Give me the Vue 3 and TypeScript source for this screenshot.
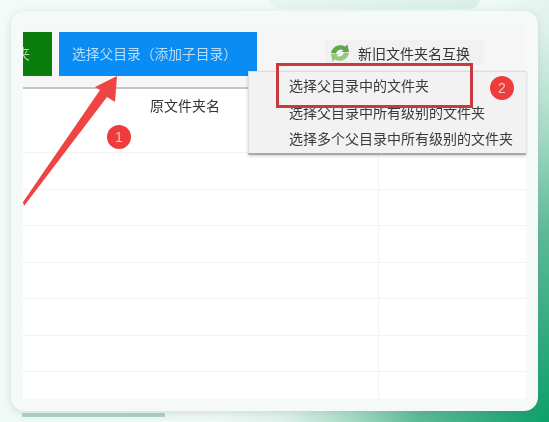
<script setup lang="ts">
const rows: number[] = [1, 2, 3, 4, 5, 6]
const menuItems: string[] = ['选择父目录中所有级别的文件夹', '选择多个父目录中所有级别的文件夹']
</script>

<template>
  <div class="page">
    <div class="top-tab"></div>
    <div class="tail"></div>
    <div class="card">
      <div class="shot">
        <div class="toolbar">
          <div class="btn-green"><span>夹</span></div>
          <div class="btn-blue">选择父目录（添加子目录）</div>
          <div class="swap">
            <svg class="swap-icon" viewBox="0 0 20 18">
              <path d="M1 9C2 3 9 -1 15 2.500L17.500 0.500L19 8L11.500 8L13.500 6C10 4.500 7 6 6 9.500Z" fill="#5fa64a" />
              <path d="M19 9C18 15 11 19 5 15.500L2.500 17.500L1 10L8.500 10L6.500 12C10 13.500 13 12 14 8.500Z" fill="#93c978" />
            </svg>
            <span>新旧文件夹名互换</span>
          </div>
        </div>
        <div class="head"><span>原文件夹名</span></div>
        <div v-for="r in rows" :key="r" class="row">
          <div class="cell-a"></div>
          <div class="cell-b"></div>
        </div>
        <div class="row last">
          <div class="cell-a"></div>
          <div class="cell-b"></div>
        </div>
      </div>
      <div class="menu">
        <div class="menu-first">选择父目录中的文件夹</div>
        <div v-for="m in menuItems" :key="m" class="menu-item">{{ m }}</div>
      </div>
      <div class="red-box"></div>
      <svg class="arrow" viewBox="0 0 120 140">
        <path d="M0 129L77 17L72 14L94 3L92 29L84 24L1 133Z" fill="#ef4444" />
      </svg>
      <div class="badge one">1</div>
      <div class="badge two">2</div>
    </div>
  </div>
</template>

<style>
html, body { margin: 0; padding: 0; }
</style>

<style scoped>
.page {
  position: relative;
  width: 549px;
  height: 422px;
  box-sizing: border-box;
  padding: 11px;
  overflow: hidden;
  background: linear-gradient(124deg, #f3fbf8 0%, #eef9f5 60%, #dff2eb 68%, #a8dcc8 76%, #5fbb98 84%, #0ba06a 100%);
  font-family: "Noto Sans CJK SC", "Liberation Sans", sans-serif;
}
.top-tab {
  position: absolute;
  left: 270px;
  top: -10px;
  width: 210px;
  height: 19px;
  border-radius: 0 0 10px 10px;
  background: linear-gradient(90deg, #e6f6f0, #d9efe7);
}
.tail {
  position: absolute;
  left: 22px;
  top: 413px;
  width: 143px;
  height: 4px;
  border-radius: 1px;
  background: #a9d6c6;
}
.card {
  position: relative;
  width: 527px;
  height: 400px;
  box-sizing: border-box;
  padding: 12px;
  border-radius: 14px;
  background: #f5faf8;
  box-shadow: 0 2px 8px rgba(60, 70, 80, 0.16);
}
.shot {
  height: 376px;
  overflow: hidden;
  background: #fff;
  filter: blur(0.5px);
}
.toolbar {
  display: flex;
  align-items: flex-start;
  height: 66px;
  box-sizing: border-box;
  padding-top: 9px;
  background: #f6f6f6;
  border-bottom: 2px solid #c4c4c4;
}
.btn-green {
  width: 29px;
  height: 44px;
  margin-right: 7px;
  overflow: hidden;
  background: #0a7d0c;
  color: #b6dcb6;
  font-size: 14px;
  line-height: 42px;
}
.btn-green span { display: block; margin-left: -7px; }
.btn-blue {
  width: 198px;
  height: 44px;
  box-sizing: border-box;
  padding-left: 13px;
  background: #0a8cf5;
  color: #b9def9;
  font-size: 13.75px;
  line-height: 42px;
  white-space: nowrap;
}
.swap {
  display: flex;
  align-items: center;
  gap: 8px;
  height: 25px;
  margin-left: 68px;
  margin-top: 8px;
  padding: 0 14px 0 5px;
  background: #f1f1f1;
  font-size: 14px;
  color: #333;
}
.swap-icon { width: 20px; height: 18px; }
.head {
  height: 64px;
  box-sizing: border-box;
  padding-top: 4px;
  padding-left: 127px;
  border-bottom: 1px solid #f3f3f3;
  font-size: 14px;
  line-height: 24px;
  color: #333;
}
.row {
  display: flex;
  height: 36.5px;
  box-sizing: border-box;
  border-bottom: 1px solid #f3f3f3;
}
.row.last { height: 27px; border-bottom: 0; }
.cell-a {
  width: 355px;
  border-right: 1px solid #f4f4f4;
}
.cell-b { flex: 1; }
.menu {
  position: absolute;
  left: 237px;
  top: 60px;
  width: 278px;
  height: 84px;
  box-sizing: border-box;
  padding-left: 40px;
  background: #f2f2f2;
  border-left: 1px solid #ddd;
  border-top: 1px solid #e4d8d8;
  border-bottom: 2px solid #a8a8a8;
  box-shadow: 0 1px 3px rgba(0, 0, 0, 0.2);
  font-size: 14px;
  color: #3a3a3a;
  filter: blur(0.5px);
}
.menu-first { height: 27px; line-height: 27px; }
.menu-item { height: 26px; line-height: 26px; white-space: nowrap; }
.red-box {
  position: absolute;
  left: 265px;
  top: 52px;
  width: 197px;
  height: 45px;
  box-sizing: border-box;
  border: 3px solid #c93a40;
  filter: blur(0.4px);
}
.arrow {
  position: absolute;
  left: 12px;
  top: 62px;
  width: 120px;
  height: 140px;
  filter: blur(0.4px);
}
.badge {
  position: absolute;
  width: 24px;
  height: 24px;
  border-radius: 50%;
  background: #ee3b3b;
  color: #f7c4c4;
  font-size: 14px;
  line-height: 24px;
  text-align: center;
  font-family: "Liberation Sans", sans-serif;
  filter: blur(0.4px);
}
.one { left: 96px; top: 114px; }
.two { left: 479px; top: 65px; }
</style>
